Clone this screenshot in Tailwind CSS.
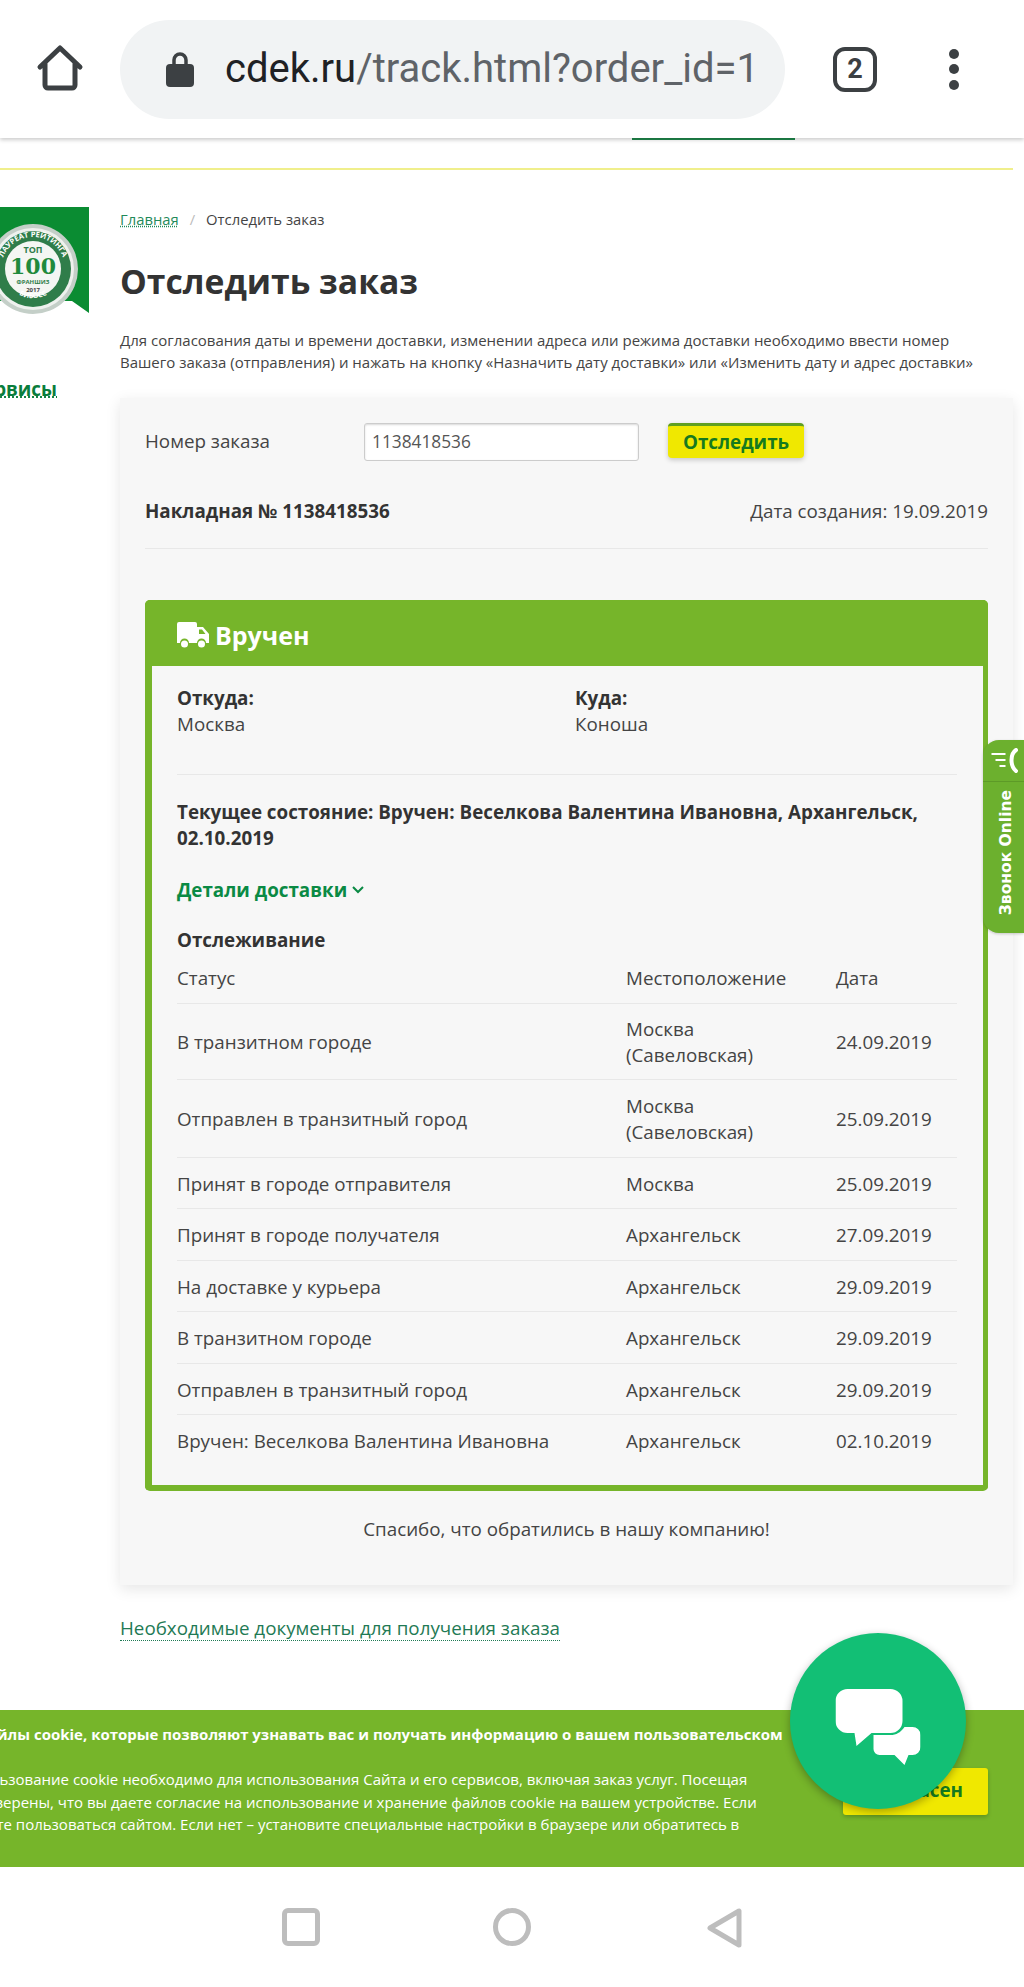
<!DOCTYPE html>
<html lang="ru">
<head>
<meta charset="UTF-8">
<meta name="viewport" content="width=device-width, initial-scale=1.0">
<title>Отследить заказ</title>
<script src="https://cdn.jsdelivr.net/npm/@tailwindcss/browser@4"></script>
</head>
<body class="bg-white font-['Open_Sans',sans-serif] text-[#333]">
<div class="relative w-[1024px] h-[1987px] overflow-hidden flex flex-col">

  <!-- browser bar -->
  <header class="h-[138px] shrink-0 bg-white flex items-center pl-[36px] shadow-[0_2px_4px_rgba(0,0,0,0.2)] relative z-10">
    <svg class="w-[48px] h-[50px] shrink-0" viewBox="0 0 48 50" fill="none" stroke="#3c4043" stroke-width="5" stroke-linejoin="round" stroke-linecap="round"><path d="M4 23 L24 4 L44 23 M9 19 V41 a3 3 0 0 0 3 3 H36 a3 3 0 0 0 3-3 V19"/></svg>
    <div class="ml-[36px] w-[665px] h-[99px] rounded-full bg-[#f1f3f4] flex items-center pl-[46px] overflow-hidden shrink-0">
      <svg class="w-[28px] h-[35px] shrink-0" viewBox="0 0 28 35"><path d="M8 14 V8 a6 6 0 0 1 12 0 V14" fill="none" stroke="#3c4043" stroke-width="3.5"/><rect x="0" y="12" width="28" height="23" rx="4" fill="#3c4043"/></svg>
      <div class="ml-[31px] w-[535px] overflow-hidden whitespace-nowrap font-['Roboto',sans-serif] text-[40px] text-[#5f6368]"><span class="text-[#202124]">cdek.ru</span>/track.html?order_id=11</div>
    </div>
    <div class="ml-[48px] w-[44px] h-[45px] shrink-0 border-[4.5px] border-[#3c4043] rounded-[12px] flex items-center justify-center font-['Roboto',sans-serif] font-bold text-[27px] text-[#3c4043]">2</div>
    <div class="ml-[72px] flex flex-col gap-[5.5px]">
      <span class="w-[10px] h-[10px] rounded-full bg-[#3c4043]"></span>
      <span class="w-[10px] h-[10px] rounded-full bg-[#3c4043]"></span>
      <span class="w-[10px] h-[10px] rounded-full bg-[#3c4043]"></span>
    </div>
  </header>

  <!-- rest of the site nav, scrolled away -->
  <div class="h-[30px] shrink-0 relative">
    <div class="ml-[632px] w-[163px] h-[2px] bg-[#1f8a4c]"></div>
  </div>
  <div class="w-[1013px] h-[2px] shrink-0 bg-[#f0ef8c]"></div>

  <div class="flex flex-1 min-h-0">
    <!-- left column -->
    <aside class="w-[120px] shrink-0 pt-[37px]">
      <svg class="w-[89px] h-[112px]" viewBox="0 0 89 112">
        <path d="M0 0 H89 V106 L72 94 H0 Z" fill="#0a8c32"/>
        <circle cx="33" cy="62" r="45" fill="#c4cfc8"/>
        <circle cx="33" cy="62" r="41" fill="#eef1ee"/>
        <circle cx="33" cy="62" r="38" fill="#2f7d4a"/>
        <circle cx="33" cy="62" r="28" fill="#f4f6f3"/>
        <defs>
          <path id="ringTop" d="M1 62 a32 32 0 0 1 64 0"/>
          <path id="ringBottom" d="M5 72 a30 30 0 0 0 56 0"/>
        </defs>
        <text font-family="Open Sans" font-weight="700" font-size="7.5" fill="#fff"><textPath href="#ringTop" startOffset="50%" text-anchor="middle">ЛАУРЕАТ РЕЙТИНГА</textPath></text>
        <text font-family="Open Sans" font-weight="700" font-size="7" fill="#fff"><textPath href="#ringBottom" startOffset="50%" text-anchor="middle">БИБОСС</textPath></text>
        <text x="33" y="46" text-anchor="middle" font-family="Open Sans" font-weight="700" font-size="9" fill="#2f7d4a">ТОП</text>
        <text x="33" y="67" text-anchor="middle" font-family="DejaVu Serif" font-weight="700" font-size="22" fill="#1f8a3c">100</text>
        <text x="33" y="77" text-anchor="middle" font-family="Open Sans" font-weight="700" font-size="6" fill="#2f7d4a">ФРАНШИЗ</text>
        <text x="33" y="85" text-anchor="middle" font-family="Open Sans" font-weight="700" font-size="6" fill="#444">2017</text>
      </svg>
      <div class="mt-[58px] w-[57px] overflow-hidden flex justify-end">
        <a class="font-bold text-[18.8px] leading-[24px] text-[#0a7d3c] underline decoration-dotted whitespace-nowrap">Сервисы</a>
      </div>
    </aside>

    <!-- main column -->
    <main class="w-[893px] shrink-0 pt-[39px]">
      <nav class="flex items-center text-[14.8px] leading-[20px] text-[#444]">
        <a class="text-[#1f8a5a] underline decoration-dotted">Главная</a>
        <span class="mx-[11px] text-[#bbb]">/</span>
        <span>Отследить заказ</span>
      </nav>
      <h1 class="mt-[30px] font-bold text-[33.7px] leading-[44px] text-[#333]">Отследить заказ</h1>
      <p class="mt-[26px] text-[15px] leading-[22px] text-[#444] whitespace-nowrap">Для согласования даты и времени доставки, изменении адреса или режима доставки необходимо ввести номер<br>Вашего заказа (отправления) и нажать на кнопку «Назначить дату доставки» или «Изменить дату и адрес доставки»</p>

      <section class="mt-[25px] h-[1187px] bg-[#f7f7f7] shadow-[0_4px_14px_rgba(0,0,0,0.1)] px-[25px] pt-[25px]">
        <div class="flex items-center h-[37px]">
          <label class="w-[219px] text-[18.8px] text-[#444]">Номер заказа</label>
          <input class="w-[275px] h-[38px] bg-white border border-[#ccc] rounded-[3px] px-[7px] text-[17.3px] text-[#555] shadow-[inset_0_1px_2px_rgba(0,0,0,0.15)]" value="1138418536">
          <button class="self-start ml-[29px] w-[136px] h-[35px] bg-[#f0e800] border-t-[3px] border-[#5f9f20] rounded-[4px] font-bold text-[18.8px] leading-[28px] text-[#157a1f] shadow-[0_2px_5px_rgba(0,0,0,0.2)]">Отследить</button>
        </div>
        <div class="mt-[38px] flex justify-between items-center h-[26px] text-[18.8px]">
          <b class="font-bold">Накладная № 1138418536</b>
          <span class="text-[#444]">Дата создания: 19.09.2019</span>
        </div>
        <div class="mt-[24px] h-px bg-[#e8e8e8]"></div>

        <!-- status panel -->
        <div class="mt-[51px] border-l-[7px] border-r-[5px] border-b-[6px] border-[#76b52a] rounded-[5px]">
          <div class="-ml-[7px] -mr-[5px] h-[66px] pt-[5px] bg-[#76b52a] rounded-t-[5px] flex items-center pl-[32px] text-white font-bold text-[25px]">
            <svg class="w-[32px] h-[27px] mr-[6px]" viewBox="0 0 32 27" fill="#fff"><path d="M0 2 a2 2 0 0 1 2-2 H18 a2 2 0 0 1 2 2 V5 H26 L32 12 V21 H29 a4.5 4.5 0 0 0-9 0 H12 a4.5 4.5 0 0 0-9 0 H0 Z M22 7.5 V12 H28.5 L25 7.5 Z"/><circle cx="7.5" cy="22" r="3.5"/><circle cx="24.5" cy="22" r="3.5"/></svg>
            Вручен
          </div>
          <div class="pl-[25px] pr-[26px] pt-[19px] pb-[19px] text-[18.8px] leading-[26px]">
            <div class="flex">
              <div class="w-[398px]"><b class="block font-bold">Откуда:</b><span class="text-[#444]">Москва</span></div>
              <div><b class="block font-bold">Куда:</b><span class="text-[#444]">Коноша</span></div>
            </div>
            <div class="mt-[37px] h-px bg-[#e8e8e8]"></div>
            <p class="mt-[24px] font-bold">Текущее состояние: Вручен: Веселкова Валентина Ивановна, Архангельск, 02.10.2019</p>
            <a class="mt-[26px] flex items-center font-bold text-[#0a8a44]">Детали доставки
              <svg class="w-[12px] h-[8px] ml-[5px]" viewBox="0 0 12 8" fill="none" stroke="#0a8a44" stroke-width="2"><path d="M1 1 L6 6 L11 1"/></svg>
            </a>
            <h3 class="mt-[24px] font-bold">Отслеживание</h3>
            <table class="mt-[1px] w-full table-fixed border-collapse text-[#444] [&_tr+tr_td]:pt-[2px]">
              <tbody>
                <tr class="h-[49px]"><td class="w-[449px]">Статус</td><td class="w-[210px]">Местоположение</td><td>Дата</td></tr>
                <tr class="h-[76px] border-t border-[#e8e8e8]"><td>В транзитном городе</td><td class="pr-[30px]">Москва (Савеловская)</td><td>24.09.2019</td></tr>
                <tr class="h-[78px] border-t border-[#e8e8e8]"><td>Отправлен в транзитный город</td><td class="pr-[30px]">Москва (Савеловская)</td><td>25.09.2019</td></tr>
                <tr class="h-[51px] border-t border-[#e8e8e8]"><td>Принят в городе отправителя</td><td>Москва</td><td>25.09.2019</td></tr>
                <tr class="h-[52px] border-t border-[#e8e8e8]"><td>Принят в городе получателя</td><td>Архангельск</td><td>27.09.2019</td></tr>
                <tr class="h-[51px] border-t border-[#e8e8e8]"><td>На доставке у курьера</td><td>Архангельск</td><td>29.09.2019</td></tr>
                <tr class="h-[52px] border-t border-[#e8e8e8]"><td>В транзитном городе</td><td>Архангельск</td><td>29.09.2019</td></tr>
                <tr class="h-[51px] border-t border-[#e8e8e8]"><td>Отправлен в транзитный город</td><td>Архангельск</td><td>29.09.2019</td></tr>
                <tr class="h-[52px] border-t border-[#e8e8e8]"><td>Вручен: Веселкова Валентина Ивановна</td><td>Архангельск</td><td>02.10.2019</td></tr>
              </tbody>
            </table>
          </div>
        </div>
        <p class="mt-[25px] text-center text-[18.8px] leading-[26px] text-[#444]">Спасибо, что обратились в нашу компанию!</p>
      </section>

      <a class="mt-[31px] inline-block text-[18.8px] leading-[24px] text-[#1f7a55] border-b border-dotted border-[#1f7a55]">Необходимые документы для получения заказа</a>
    </main>
  </div>

  <!-- cookie bar -->
  <div class="h-[157px] shrink-0 bg-[#76b52a] overflow-hidden relative text-white pt-[12px]">
    <div class="-ml-[154px] font-bold text-[15px] leading-[24px] whitespace-nowrap">Мы используем файлы cookie, которые позволяют узнавать вас и получать информацию о вашем пользовательском</div>
    <div class="mt-[22px] -ml-[47px] text-[15px] leading-[22.5px] whitespace-nowrap">
      <div class="pl-[1px]">Использование cookie необходимо для использования Сайта и его сервисов, включая заказ услуг. Посещая</div>
      <div class="pl-[5px]">Мы уверены, что вы даете согласие на использование и хранение файлов cookie на вашем устройстве. Если</div>
      <div class="pl-[10px]">хотите пользоваться сайтом. Если нет – установите специальные настройки в браузере или обратитесь в</div>
    </div>
    <button class="absolute left-[843px] top-[58px] w-[145px] h-[47px] pb-[3px] bg-[#f0e800] rounded-[3px] font-bold text-[18.8px] text-[#157a1f] text-right pr-[25px] shadow-[0_2px_4px_rgba(0,0,0,0.2)]">Согласен</button>
  </div>

  <!-- android nav bar -->
  <footer class="h-[120px] shrink-0 bg-white flex items-start pt-[41px] pl-[282px]">
    <span class="w-[38px] h-[38px] border-[5px] border-[#bdbdbd] rounded-[6px]"></span>
    <span class="ml-[173px] w-[38px] h-[38px] border-[5px] border-[#bdbdbd] rounded-full"></span>
    <svg class="ml-[175px] w-[38px] h-[40px]" viewBox="0 0 38 40" fill="none" stroke="#bdbdbd" stroke-width="5" stroke-linejoin="round"><path d="M33 3 V37 L4 20 Z"/></svg>
  </footer>

  <!-- floating call tab -->
  <div class="absolute left-[983px] top-[740px] w-[41px] h-[193px] bg-[#6cb02e] rounded-l-[16px] text-white flex flex-col items-center shadow-[0_1px_3px_rgba(0,0,0,0.2)]">
    <div class="h-[42px] w-full flex items-center justify-center border-b border-[#5d9a27]">
      <svg class="w-[28px] h-[26px]" viewBox="0 0 28 26" fill="none" stroke="#fff" stroke-width="2"><path d="M1.5 6 H15.5 M5.5 12 H15.5 M9.5 18 H15.5"/><path d="M26 2 C20 6 20 18 26 23" stroke-width="4" stroke-linecap="round"/></svg>
    </div>
    <span class="mt-[8px] translate-x-[3px] [writing-mode:vertical-rl] rotate-180 font-['DejaVu_Sans',sans-serif] font-bold text-[15.5px] leading-[41px] whitespace-nowrap">Звонок Online</span>
  </div>

  <!-- floating chat button -->
  <div class="absolute left-[790px] top-[1633px] w-[176px] h-[176px] rounded-full bg-[#12bf75] shadow-[0_3px_8px_rgba(0,0,0,0.3)] flex items-center justify-center">
    <svg class="w-[85px] h-[76px] translate-x-[-0.5px] translate-y-[6px]" viewBox="0 0 85 76" fill="#fff"><path d="M12 0 H55 a12 12 0 0 1 12 12 V32 a12 12 0 0 1-12 12 H36 L21 57 L19 44 H12 a12 12 0 0 1-12-12 V12 a12 12 0 0 1 12-12 Z"/><path d="M57 46 C63 45 66 42 69 38 H77 a8 8 0 0 1 8 8 V58 a8 8 0 0 1-8 8 H73 L69 76 L59 66 H44 a6 6 0 0 1-6-6 V46 Z"/></svg>
  </div>
</div>
</body>
</html>
